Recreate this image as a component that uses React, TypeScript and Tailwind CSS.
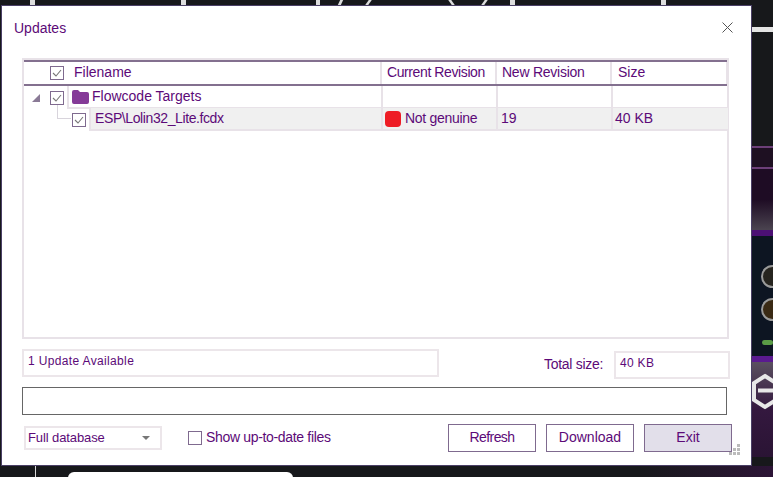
function Check({ on = true }: { on?: boolean }) {
  return (
    <span className="flex h-[14px] w-[14px] shrink-0 items-center justify-center border border-[#7f6a8f] bg-white">
      {on && (
        <svg width="10" height="8" viewBox="0 0 10 8" fill="none">
          <path d="M1 4l3 3 5-6" stroke="#777" strokeWidth="1.1" />
        </svg>
      )}
    </span>
  );
}

const headClass = "grid grid-cols-[358px_115px_115px_116px]";
const rowClass = "grid grid-cols-[357px_115px_115px_117px]";

function Backdrop() {
  return (
    <div className="absolute inset-0 overflow-hidden bg-[#17181b]">
      {/* right hand side strip */}
      <div className="absolute left-[752px] top-[27px] h-[5px] w-[21px] bg-[#e4e4e4]" />
      <div className="absolute left-[752px] top-[146px] h-[2px] w-[21px] bg-[#6c3f78]" />
      <div className="absolute left-[752px] top-[148px] h-[19px] w-[21px] bg-[#1e1022]" />
      <div className="absolute left-[752px] top-[167px] h-[2px] w-[21px] bg-[#6c3f78]" />
      <div className="absolute left-[752px] top-[169px] h-[61px] w-[21px] bg-gradient-to-b from-[#1e0c24] via-[#1e0c24] to-[#4b4450]" />
      <div className="absolute left-[752px] top-[230px] h-[6px] w-[21px] bg-[#4c1074]" />
      <div className="absolute left-[752px] top-[236px] h-[120px] w-[21px] bg-[#0d1522]" />
      <div className="absolute left-[752px] top-[356px] h-[6px] w-[21px] bg-[#5a1a90]" />
      <div className="absolute left-[752px] top-[362px] h-[95px] w-[21px] bg-gradient-to-b from-[#5a5060] via-[#34183f] to-[#2a1434]" />
      <div className="absolute left-[640px] top-[466px] h-[11px] w-[133px] bg-gradient-to-r from-[#17181b] to-[#2c1436]" />
      <div className="absolute left-[761px] top-[265px] h-[23px] w-[23px] rounded-full border-[2px] border-[#9a9a9a] bg-[#26241f]" />
      <div className="absolute left-[761px] top-[298px] h-[23px] w-[23px] rounded-full border-[2px] border-[#9a9a9a] bg-[#3a2a14]" />
      <div className="absolute left-[762px] top-[340px] h-[5px] w-[11px] rounded-sm bg-[#5a9c46]" />
      <svg className="absolute left-[751px] top-[373px]" width="22" height="38" viewBox="0 0 22 38" fill="none">
        <path d="M14 3L25 10V27L14 34L3 27V10Z" stroke="#e8e8e8" strokeWidth="4" />
        <path d="M7 17.5H22" stroke="#e8e8e8" strokeWidth="4" />
      </svg>

      {/* bits of the window behind */}
      <div className="absolute left-[68px] top-[472px] h-[8px] w-[225px] rounded-t-md bg-white" />
      <div className="absolute left-[35px] top-[465px] h-[12px] w-px bg-[#d8d8d8]" />
      <div className="absolute left-[30px] top-0 h-[5px] w-[5px] bg-[#ddd]" />
      <div className="absolute left-[181px] top-0 h-[5px] w-[5px] bg-[#ddd]" />
      <div className="absolute left-[316px] top-0 h-[5px] w-[4px] bg-[#ddd]" />
      <div className="absolute left-[339px] top-0 h-[5px] w-[3px] -skew-x-[25deg] bg-[#ddd]" />
      <div className="absolute left-[367px] top-0 h-[5px] w-[3px] skew-x-[-35deg] bg-[#ddd]" />
      <div className="absolute left-[450px] top-0 h-[5px] w-[3px] skew-x-[35deg] bg-[#ddd]" />
      <div className="absolute left-[483px] top-0 h-[5px] w-[3px] skew-x-[-35deg] bg-[#ddd]" />
      <div className="absolute left-[510px] top-0 h-[5px] w-[5px] bg-[#ddd]" />
      <div className="absolute left-[661px] top-0 h-[5px] w-[5px] bg-[#ddd]" />
    </div>
  );
}

export default function App() {
  return (
    <div className="relative h-[477px] w-[773px] overflow-hidden font-['Liberation_Sans',sans-serif] text-[14px] text-[#5c0a78]">
      <Backdrop />

      {/* DIALOG */}
      <div className="relative ml-px mt-[5px] flex h-[461px] w-[751px] flex-col border border-[#4a3f66] bg-white pl-[20px] pr-[21px]">
        <div className="flex h-[52px] shrink-0 items-start justify-between pt-[13px]">
          <span className="-ml-[8px] leading-[18px]">Updates</span>
          <svg className="mr-[-3px] mt-[3px]" width="11" height="11" viewBox="0 0 11 11" fill="none">
            <path d="M.5.5l10 10M10.5.5l-10 10" stroke="#555" strokeWidth="1" />
          </svg>
        </div>

        {/* FILE LIST */}
        <div className="h-[281px] w-[707px] shrink-0 border-2 border-[#e8e2e8]">
          <div className={`${headClass} h-[26px] border-y-2 border-y-[#83708f]`}>
            <div className="flex items-center border-r-2 border-[#e8e2e8] pl-[26px]">
              <Check />
              <span className="mb-px ml-[10px]">Filename</span>
            </div>
            <div className="flex items-center border-r-2 border-[#e8e2e8] pb-px pl-[5px] tracking-[-0.4px]">Current Revision</div>
            <div className="flex items-center border-r-2 border-[#e8e2e8] pb-px pl-[5px] tracking-[-0.25px]">New Revision</div>
            <div className="flex items-center border-r-2 border-[#e8e2e8] pb-px pl-[6px]">Size</div>
          </div>

          <div className={`${rowClass} h-[22px]`}>
            <div className="flex items-center pl-[8px]">
              <svg width="8" height="8" viewBox="0 0 8 8">
                <path d="M8 0v8H0z" fill="#8a7a96" />
              </svg>
              <span className="ml-[10px]"><Check /></span>
              <span className="ml-[3px] flex h-full flex-1 items-center border-b-2 border-l-2 border-[#e8e2e8] pl-[3px]">
                <svg width="17" height="14" viewBox="0 0 17 14">
                  <path d="M0 2q0-2 2-2h4l2 2h7q2 0 2 2v8q0 2-2 2H2q-2 0-2-2z" fill="#853a98" />
                </svg>
                <span className="ml-[3px]">Flowcode Targets</span>
              </span>
            </div>
            <div className="border-b-2 border-l-2 border-[#e8e2e8]" />
            <div className="border-b-2 border-l-2 border-[#e8e2e8]" />
            <div className="border-b-2 border-l-2 border-[#e8e2e8]" />
          </div>

          <div className={`${rowClass} h-[22px]`}>
            <div className="relative flex items-center pl-[48px]">
              <span className="absolute left-[33px] top-[-3px] h-[14px] w-[14px] border-b border-l border-[#d8d4dc]" />
              <Check />
              <span className="ml-[3px] flex h-full flex-1 items-center border-b-2 border-l-2 border-[#e8e2e8] bg-[#f0f0f0] pl-[4px] tracking-[-0.4px]">
                ESP\Lolin32_Lite.fcdx
              </span>
            </div>
            <div className="flex items-center border-b-2 border-l-2 border-[#e8e2e8] bg-[#f0f0f0] pl-[2px]">
              <span className="h-[16px] w-[16px] rounded-[4px] bg-[#ee1c25]" />
              <span className="ml-[4px] tracking-[-0.3px]">Not genuine</span>
            </div>
            <div className="flex items-center border-b-2 border-l-2 border-[#e8e2e8] bg-[#f0f0f0] pl-[3px]">19</div>
            <div className="flex items-center border-b-2 border-l-2 border-[#e8e2e8] bg-[#f0f0f0] pl-[2px]">40 KB</div>
          </div>
        </div>

        {/* STATUS */}
        <div className="mt-[10px] flex h-[30px] shrink-0 items-start">
          <div className="h-[28px] w-[417px] border-2 border-[#ece6ea] pl-[4px] text-[12px] leading-[20px] tracking-[0.35px]">
            1 Update Available
          </div>
          <span className="ml-auto mt-[6px] leading-[18px] tracking-[-0.3px]">Total size:</span>
          <div className="ml-[11px] mt-[2px] h-[28px] w-[116px] border-2 border-[#ece6ea] pl-[4px] text-[12px] leading-[20px] tracking-[0.3px]">
            40 KB
          </div>
        </div>

        <div className="mt-[8px] h-[28px] w-[705px] shrink-0 border border-[#666]" />

        {/* BOTTOM BAR */}
        <div className="mt-[9px] flex items-center pl-[2px]">
          <div className="flex h-[24px] w-[138px] items-center justify-between border-2 border-[#ece6ea] pl-[2px] pr-[10px]">
            <span className="mb-px text-[13px] tracking-[-0.1px]">Full database</span>
            <svg width="8" height="4" viewBox="0 0 8 4">
              <path d="M0 0h8L4 4z" fill="#777" />
            </svg>
          </div>
          <span className="ml-[26px]"><Check on={false} /></span>
          <span className="mb-px ml-[4px] tracking-[-0.33px]">Show up-to-date files</span>
          <div className="ml-auto mr-[-2px] flex gap-[10px]">
            <div className="flex h-[28px] w-[88px] items-center justify-center border border-[#7f6a8f] pb-px tracking-[-0.6px]">Refresh</div>
            <div className="flex h-[28px] w-[88px] items-center justify-center border border-[#7f6a8f] pb-px">Download</div>
            <div className="flex h-[28px] w-[88px] items-center justify-center border border-[#7f6a8f] bg-[#e2dfea] pb-px">Exit</div>
          </div>
        </div>

        {/* GRIP */}
        <svg className="absolute bottom-[10px] right-[11px]" width="11" height="11" viewBox="0 0 11 11" fill="#bbb">
          <rect x="8" y="0" width="3" height="3" />
          <rect x="4" y="4" width="3" height="3" />
          <rect x="8" y="4" width="3" height="3" />
          <rect x="0" y="8" width="3" height="3" />
          <rect x="4" y="8" width="3" height="3" />
          <rect x="8" y="8" width="3" height="3" />
        </svg>
      </div>
    </div>
  );
}
